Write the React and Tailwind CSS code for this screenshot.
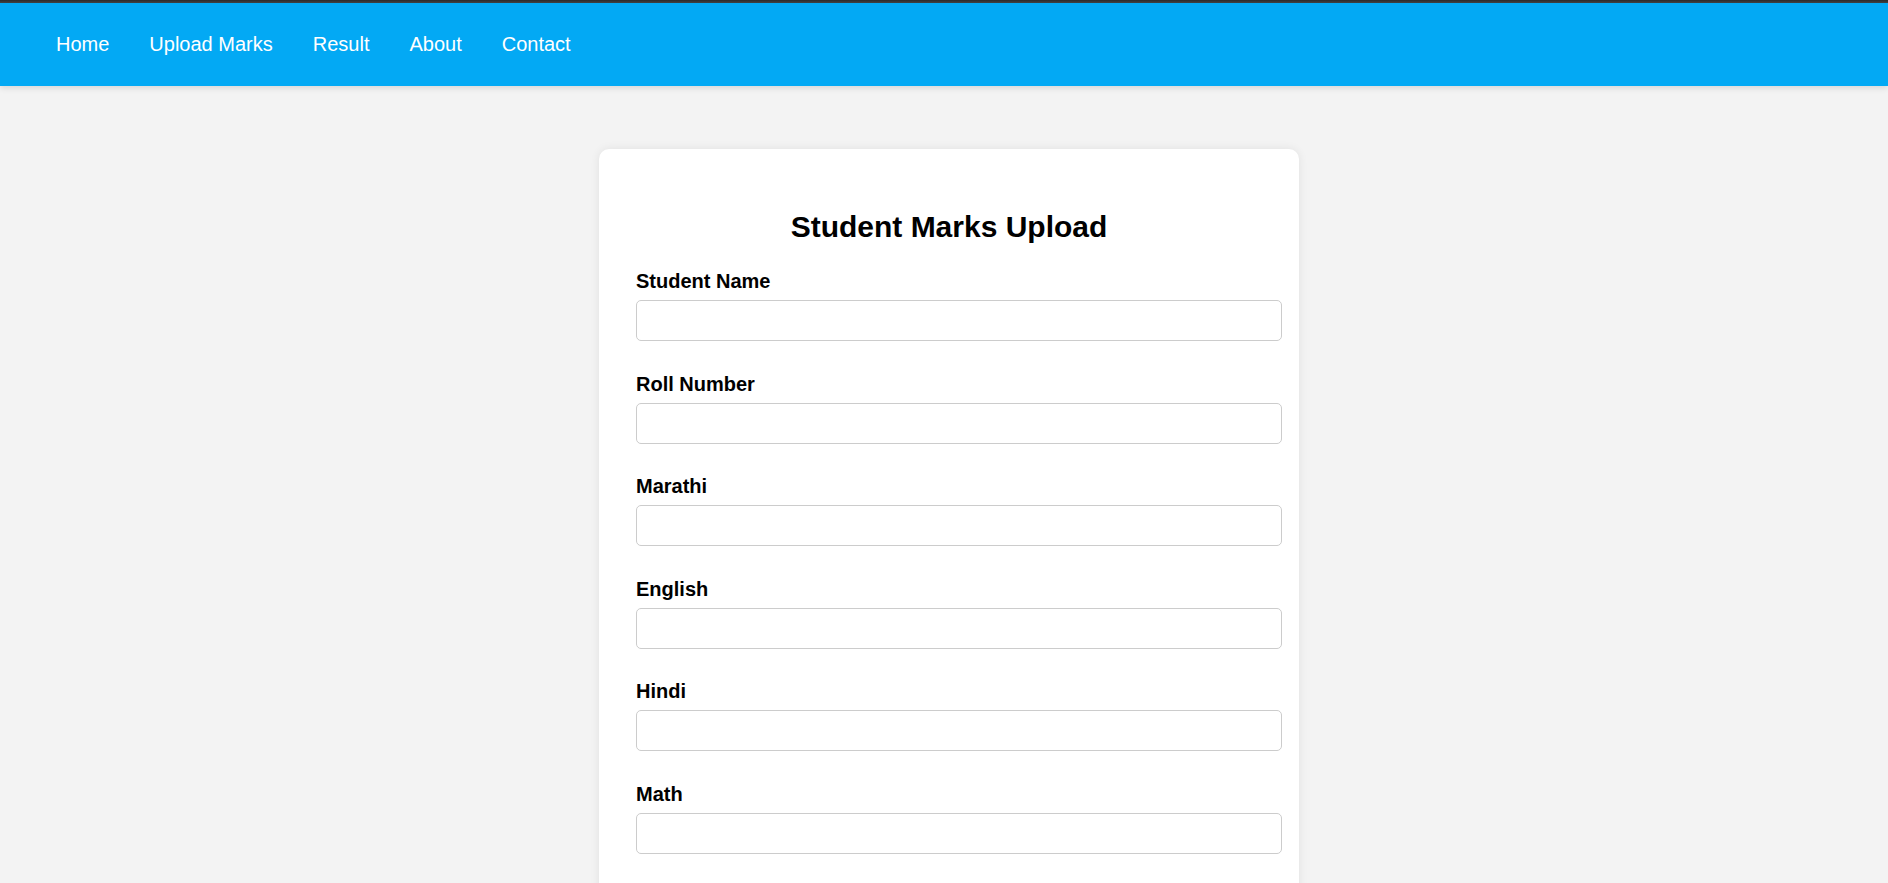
import { useState } from "react";

const NAV = ["Home", "Upload Marks", "Result", "About", "Contact"];
const FIELDS = ["Student Name", "Roll Number", "Marathi", "English", "Hindi", "Math"];

export default function App() {
  const [values, setValues] = useState({});

  return (
    <div className="min-h-screen bg-[#f3f3f3] font-['Liberation_Sans',Arial,sans-serif]">
      <div className="h-[3px] bg-gradient-to-b from-[#2b2b2b] to-[#444]" />
      <nav className="h-[83px] bg-[#03a9f4] flex items-center px-[36px] shadow-[0_2px_6px_rgba(0,0,0,0.12)] relative z-10">
        {NAV.map((n) => (
          <a key={n} href="#" className="px-5 text-[20px] leading-[23px] text-white">
            {n}
          </a>
        ))}
      </nav>

      <div className="pt-[63px] pb-10 flex justify-center">
        <form
          className="w-[700px] ml-[10px] bg-white rounded-[10px] shadow-[0_0_10px_rgba(0,0,0,0.08)] pt-[61px] pl-[37px] pr-[17px] pb-10"
          onSubmit={(e) => e.preventDefault()}
        >
          <h2 className="text-center text-[30px] leading-[34px] font-bold text-black mb-[26px] pr-[20px]">
            Student Marks Upload
          </h2>
          {FIELDS.map((f) => (
            <div key={f} className="mb-[31.5px]">
              <label className="block text-[20px] leading-[23px] font-bold text-black mb-[7px]">{f}</label>
              <input
                type="text"
                value={values[f] || ""}
                onChange={(e) => setValues({ ...values, [f]: e.target.value })}
                className="block w-[646px] h-[41px] border border-[#cccccc] rounded-[5px] px-[10px] text-[16px] outline-none"
              />
            </div>
          ))}
        </form>
      </div>
    </div>
  );
}
